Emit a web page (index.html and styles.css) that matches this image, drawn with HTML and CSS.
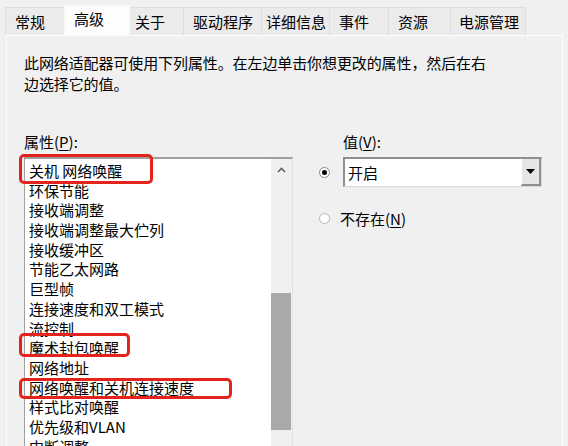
FILE: index.html
```html
<!DOCTYPE html>
<html lang="zh-CN">
<head>
    <meta charset="UTF-8">
    <title>高级</title>
    <link rel="stylesheet" href="styles.css">
</head>
<body>

<div class="dialog">
    <!-- 选项卡 -->
    <div class="tab-strip">
        <div class="tab">常规</div>
        <div class="tab active">高级</div>
        <div class="tab">关于</div>
        <div class="tab">驱动程序</div>
        <div class="tab">详细信息</div>
        <div class="tab">事件</div>
        <div class="tab">资源</div>
        <div class="tab">电源管理</div>
    </div>

    <!-- 高级页 -->
    <div class="tab-panel">
        <p class="intro">此网络适配器可使用下列属性。在左边单击你想更改的属性，然后在右<br>边选择它的值。</p>

        <div class="columns">
            <div class="prop-column">
                <div class="field-label">属性(<u>P</u>):</div>
                <div class="list-box">
                    <div class="list-items">
                        <div class="list-item">关机 网络唤醒</div>
                        <div class="list-item">环保节能</div>
                        <div class="list-item">接收端调整</div>
                        <div class="list-item">接收端调整最大伫列</div>
                        <div class="list-item">接收缓冲区</div>
                        <div class="list-item">节能乙太网路</div>
                        <div class="list-item">巨型帧</div>
                        <div class="list-item">连接速度和双工模式</div>
                        <div class="list-item">流控制</div>
                        <div class="list-item">魔术封包唤醒</div>
                        <div class="list-item">网络地址</div>
                        <div class="list-item">网络唤醒和关机连接速度</div>
                        <div class="list-item">样式比对唤醒</div>
                        <div class="list-item">优先级和VLAN</div>
                        <div class="list-item">中断调整</div>
                    </div>
                    <div class="scrollbar">
                        <div class="scroll-arrow">
                            <svg width="9" height="6" viewBox="0 0 9 6"><path d="M1 5 L4.5 1.5 L8 5" fill="none" stroke="#606060" stroke-width="1.6"/></svg>
                        </div>
                        <div class="scroll-thumb"></div>
                    </div>

                    <!-- 红框标注 -->
                    <div class="mark mark-1"></div>
                    <div class="mark mark-2"></div>
                    <div class="mark mark-3"></div>
                </div>
            </div>

            <div class="value-column">
                <div class="field-label value-label">值(<u>V</u>):</div>
                <div class="value-row">
                    <span class="radio checked"></span>
                    <div class="combo">
                        <div class="combo-text">开启</div>
                        <div class="combo-btn">
                            <svg width="9" height="5" viewBox="0 0 9 5"><path d="M0 0 H9 L4.5 5 Z" fill="#000"/></svg>
                        </div>
                    </div>
                </div>
                <div class="radio-row">
                    <span class="radio"></span>
                    <span>不存在(<u>N</u>)</span>
                </div>
            </div>
        </div>
    </div>
</div>

</body>
</html>
```

FILE: styles.css
```css
body {
    margin: 0;
    background-color: #f0f0f0;
    font-family: "Microsoft YaHei", "Noto Sans CJK SC", sans-serif;
    font-size: 15px;
    color: #000;
    overflow: hidden;
}

.dialog {
    width: 568px;
    height: 446px;
    overflow: hidden;
}

/* 选项卡 */
.tab-strip {
    display: flex;
    align-items: flex-end;
    padding: 7px 0 0 5px;
    height: 28px;
}

.tab {
    height: 27px;
    line-height: 27px;
    padding: 0 9px;
    background-color: #ebebeb;
    border: 1px solid #dedede;
    border-bottom: none;
    margin-right: -1px;
    white-space: nowrap;
}

.tab:nth-child(1) { width: 40px; }
.tab:nth-child(3) { width: 39px; padding-left: 5px; }
.tab:nth-child(4) { width: 59px; }
.tab:nth-child(5) { width: 54px; padding-left: 4px; }
.tab:nth-child(6) { width: 40px; }
.tab:nth-child(7) { width: 43px; }
.tab:nth-child(8) { width: 57px; padding-left: 8px; }

.tab.active {
    height: 30px;
    line-height: 25px;
    width: 46px;
    background-color: #fdfdfd;
    border-color: #f7f7f7;
    position: relative;
    z-index: 2;
    margin-bottom: -1px;
}

.tab-panel {
    margin: 0 5px 0 6px;
    height: 420px;
    border: 1px solid #fcfcfc;
    border-bottom: none;
    padding: 16px 0 0 17px;
}

.intro {
    margin: 0;
    line-height: 21px;
    letter-spacing: -0.1px;
}

.columns {
    display: flex;
    margin-top: 38px;
}

.field-label {
    height: 20px;
    line-height: 20px;
}

u {
    text-decoration-thickness: 1px;
    text-underline-offset: 2px;
}

/* 属性列表 */
.prop-column {
    width: 269px;
}

.list-box {
    position: relative;
    display: flex;
    margin-top: 5px;
    height: 300px;
    border-top: 2px solid #a0a0a0;
    border-left: 1px solid #a0a0a0;
    border-right: 1px solid #e3e3e3;
    background-color: #fff;
}

.list-items {
    flex: 1;
    padding: 2px 0 0 4px;
}

.list-item {
    height: 19.7px;
    line-height: 19.7px;
    white-space: nowrap;
}

.scrollbar {
    width: 21px;
    background-color: #f0f0f0;
    display: flex;
    flex-direction: column;
}

.scroll-arrow {
    height: 22px;
    display: flex;
    align-items: center;
    justify-content: center;
}

.scroll-thumb {
    margin-top: 112px;
    height: 137px;
    margin-right: 1px;
    background-color: #a9a9a9;
}

.mark {
    position: absolute;
    border: 3px solid #e5231d;
    border-radius: 5px;
}

.mark-1 { left: -6px; top: -5px; width: 128px; height: 24px; }
.mark-2 { left: -6px; top: 174px; width: 105px; height: 18px; }
.mark-3 { left: -6px; top: 219px; width: 207px; height: 15px; }

/* 值 */
.value-column {
    margin-left: 26px;
    width: 230px;
}

.value-label {
    padding-left: 24px;
}

.value-row {
    display: flex;
    align-items: center;
    margin-top: 5px;
}

.radio {
    display: inline-block;
    box-sizing: border-box;
    width: 11px;
    height: 11px;
    border-radius: 50%;
    border: 1px solid #8a8a8a;
    background-color: #fff;
    margin: 0 12px 0 0;
    position: relative;
}

.radio.checked::after {
    content: "";
    position: absolute;
    left: 2px;
    top: 2px;
    width: 5px;
    height: 5px;
    border-radius: 50%;
    background-color: #000;
}

.combo {
    display: flex;
    width: 196px;
    height: 27px;
    border-top: 2px solid #8f8f8f;
    border-left: 2px solid #8f8f8f;
    border-right: 1px solid #d8d8d8;
    border-bottom: 1px solid #d8d8d8;
    background-color: #fff;
    margin-left: 1px;
}

.combo-text {
    flex: 1;
    line-height: 27px;
    padding-left: 3px;
}

.combo-btn {
    width: 17px;
    background-color: #e6e6e6;
    border-left: 1px solid #fff;
    border-right: 2px solid #8f8f8f;
    border-bottom: 2px solid #8f8f8f;
    display: flex;
    align-items: center;
    justify-content: center;
}

.radio-row {
    display: flex;
    align-items: center;
    margin-top: 20px;
    height: 22px;
}

.radio-row .radio {
    border-color: #b5b5b5;
    margin-right: 10px;
}
```
